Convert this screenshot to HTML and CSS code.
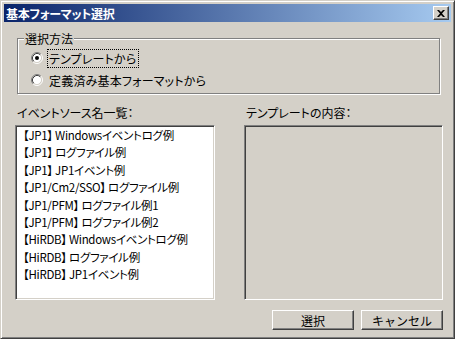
FILE: index.html
```html
<!DOCTYPE html>
<html lang="ja">
<head>
    <meta charset="UTF-8">
    <title>基本フォーマット選択</title>
    <link rel="stylesheet" href="styles.css">
</head>
<body>
    <div class="dialog">
        <div class="titlebar">
            <span class="title">基本フォーマット選択</span>
            <button class="close-button" aria-label="閉じる">
                <svg width="8" height="7" viewBox="0 0 8 7">
                    <path d="M0 0h2l2 2 2-2h2L5 3.5 8 7H6L4 5 2 7H0l3-3.5z" fill="#000"/>
                </svg>
            </button>
        </div>

        <div class="client">
            <fieldset class="group">
                <legend>選択方法</legend>
                <label class="radio">
                    <svg class="radio-mark" width="12" height="12" viewBox="0 0 12 12">
                        <circle cx="6" cy="6" r="4.5" fill="#fff"/>
                        <path d="M2.11 9.89A5.5 5.5 0 0 1 9.89 2.11" stroke="#808080" fill="none"/>
                        <path d="M9.89 2.11A5.5 5.5 0 0 1 2.11 9.89" stroke="#fff" fill="none"/>
                        <path d="M2.82 9.18A4.5 4.5 0 0 1 9.18 2.82" stroke="#404040" fill="none"/>
                        <path d="M9.18 2.82A4.5 4.5 0 0 1 2.82 9.18" stroke="#d4d0c8" fill="none"/>
                        <circle cx="6" cy="6" r="2" fill="#000"/>
                    </svg>
                    <span class="radio-text focused">テンプレートから</span>
                </label>
                <label class="radio">
                    <svg class="radio-mark" width="12" height="12" viewBox="0 0 12 12">
                        <circle cx="6" cy="6" r="4.5" fill="#fff"/>
                        <path d="M2.11 9.89A5.5 5.5 0 0 1 9.89 2.11" stroke="#808080" fill="none"/>
                        <path d="M9.89 2.11A5.5 5.5 0 0 1 2.11 9.89" stroke="#fff" fill="none"/>
                        <path d="M2.82 9.18A4.5 4.5 0 0 1 9.18 2.82" stroke="#404040" fill="none"/>
                        <path d="M9.18 2.82A4.5 4.5 0 0 1 2.82 9.18" stroke="#d4d0c8" fill="none"/>
                    </svg>
                    <span class="radio-text">定義済み基本フォーマットから</span>
                </label>
            </fieldset>

            <div class="columns">
                <div class="column">
                    <div class="caption">イベントソース名一覧：</div>
                    <ul class="listbox">
                        <li>【JP1】 Windowsイベントログ例</li>
                        <li>【JP1】 ログファイル例</li>
                        <li>【JP1】 JP1イベント例</li>
                        <li>【JP1/Cm2/SSO】 ログファイル例</li>
                        <li>【JP1/PFM】 ログファイル例1</li>
                        <li>【JP1/PFM】 ログファイル例2</li>
                        <li>【HiRDB】 Windowsイベントログ例</li>
                        <li>【HiRDB】 ログファイル例</li>
                        <li>【HiRDB】 JP1イベント例</li>
                    </ul>
                </div>
                <div class="column right">
                    <div class="caption">テンプレートの内容：</div>
                    <div class="preview"></div>
                </div>
            </div>

            <div class="actions">
                <button class="push-button">選択</button>
                <button class="push-button">キャンセル</button>
            </div>
        </div>
    </div>
</body>
</html>
```

FILE: styles.css
```css
body {
    margin: 0;
    background-color: #fff;
    font-family: "Noto Sans CJK JP", "DejaVu Sans", sans-serif;
    font-size: 12px;
    color: #000;
}
.dialog {
    width: 455px;
    height: 339px;
    box-sizing: border-box;
    padding: 3px;
    background-color: #d4d0c8;
    border: 1px solid;
    border-color: #d4d0c8 #404040 #404040 #d4d0c8;
    box-shadow: inset 1px 1px #fff, inset -1px -1px #808080;
}
.titlebar {
    height: 18px;
    display: flex;
    align-items: center;
    justify-content: space-between;
    padding: 0 2px 0 2px;
    background: linear-gradient(to right, #0a246a, #a6caf0);
}
.title {
    color: #fff;
    font-weight: bold;
    line-height: 15px;
    font-feature-settings: "palt";
    letter-spacing: -0.3px;
}
.close-button {
    width: 16px;
    height: 14px;
    padding: 0;
    display: flex;
    align-items: center;
    justify-content: center;
    background-color: #d4d0c8;
    border: 1px solid;
    border-color: #fff #404040 #404040 #fff;
    box-shadow: inset -1px -1px #808080;
}
.client {
    padding: 9px 8px 0 11px;
}
.group {
    margin: 0 3px 0 2px;
    padding: 0 0 2px 6px;
    border: 1px solid #808080;
    box-shadow: inset 1px 1px #fff, 1px 1px #fff;
}
.group legend {
    padding: 0 1px;
    line-height: 15px;
    background-color: #d4d0c8;
}
.radio {
    display: flex;
    align-items: center;
    height: 22px;
    gap: 4px;
    padding-left: 7px;
}
.radio:first-of-type {
    margin-top: 1px;
}
.radio-text {
    line-height: 15px;
    padding: 1px;
    border: 1px dotted transparent;
    font-feature-settings: "palt";
    letter-spacing: 0.2px;
}
.radio-text.focused {
    border-color: #000;
}
.columns {
    display: flex;
    gap: 29px;
    margin-top: 11px;
}
.column {
    width: 200px;
}
.column.right {
    width: 199px;
}
.caption {
    line-height: 15px;
    padding-left: 2px;
    margin-bottom: 5px;
    font-feature-settings: "palt";
}
.listbox {
    list-style: none;
    margin: 0;
    padding: 1px 0 0 7px;
    height: 175px;
    box-sizing: border-box;
    background-color: #fff;
    border: 1px solid;
    border-color: #808080 #fff #fff #808080;
    box-shadow: inset 1px 1px #404040, inset -1px -1px #d4d0c8;
}
.listbox li {
    font-size: 11.5px;
    line-height: 17.4px;
    white-space: nowrap;
    font-feature-settings: "palt";
    letter-spacing: -0.3px;
}
.preview {
    height: 175px;
    box-sizing: border-box;
    border: 1px solid;
    border-color: #808080 #fff #fff #808080;
    box-shadow: inset 1px 1px #404040, inset -1px -1px #d4d0c8;
}
.actions {
    display: flex;
    justify-content: flex-end;
    gap: 7px;
    margin-top: 10px;
}
.push-button {
    width: 82px;
    height: 20px;
    padding: 0;
    font-family: inherit;
    font-size: 12px;
    background-color: #d4d0c8;
    border: 1px solid;
    border-color: #fff #404040 #404040 #fff;
    box-shadow: inset -1px -1px #808080;
}
```
